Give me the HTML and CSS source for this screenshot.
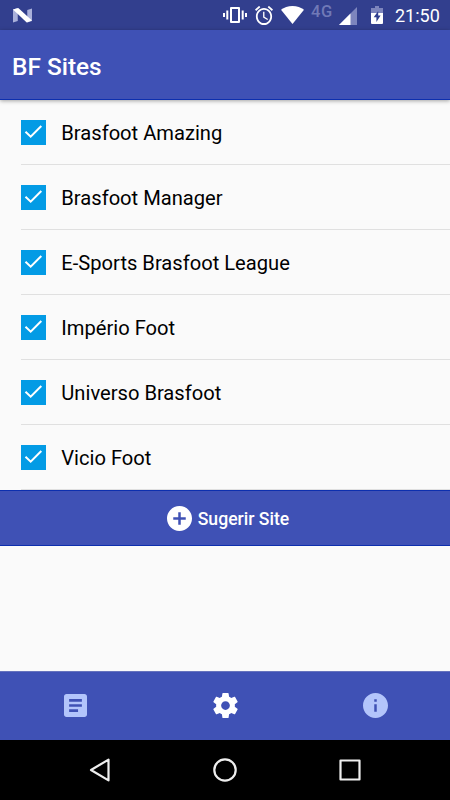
FILE: index.html
```html
<!DOCTYPE html>
<html lang="pt-br">
<head>
  <meta charset="UTF-8">
  <meta name="viewport" content="width=device-width, initial-scale=1.0">
  <title>BF Sites</title>
  <link rel="stylesheet" href="styles.css">
</head>
<body>
  <!-- Barra de status -->
  <div class="status-bar">
    <svg class="logo-n" viewBox="0 0 18 15" width="19" height="15" preserveAspectRatio="none">
      <path d="M0 1.500 4.500 0V13L0 14.500zM13.500 2 18 .5V13l-4.500 1.500z" fill="#a9b0da"/>
      <path d="M0 1.500 5 0 18 12.500l-5 2z" fill="#fff"/>
    </svg>
    <div class="status-icons">
      <svg class="vibrate" viewBox="0 0 24 18" width="24" height="18">
        <path d="M8 2h8v14H8z" fill="none" stroke="#fff" stroke-width="2" stroke-linejoin="round"/>
        <path d="M1 7v4M4.300 4.500v9M19.700 4.500v9M23 7v4" stroke="#fff" stroke-width="2"/>
      </svg>
      <svg class="alarm" viewBox="2 2 20 20" width="18" height="19" preserveAspectRatio="none">
        <path fill="#fff" d="M22 5.720l-4.600-3.860-1.290 1.530 4.600 3.860L22 5.720zM7.880 3.390L6.600 1.860 2 5.710l1.290 1.530 4.590-3.850zM12.500 8H11v6l4.750 2.850.75-1.230-4-2.370V8zM12 4c-4.970 0-9 4.030-9 9s4.020 9 9 9c4.970 0 9-4.030 9-9s-4.030-9-9-9zm0 16c-3.870 0-7-3.130-7-7s3.130-7 7-7 7 3.130 7 7-3.130 7-7 7z"/>
      </svg>
      <svg class="wifi" viewBox="0 0 23 18" width="23" height="18">
        <path fill="#fff" d="M11.500 18 0 3.800C3 1.300 7 0 11.500 0S20 1.300 23 3.800z"/>
      </svg>
      <span class="network">4G</span>
      <svg class="signal" viewBox="0 0 18 18" width="18" height="18">
        <path fill="#7d85bd" d="M0 18 18 0v18z"/>
        <path fill="#fff" d="M0 18 11.500 6.500V18z"/>
      </svg>
      <svg class="battery" viewBox="0 0 12 18" width="12" height="18">
        <path fill="#7d85bd" d="M4 0h4v2h4v6H0V2h4z"/>
        <path fill="#fff" d="M0 7h12v10q0 1-1 1H1q-1 0-1-1z"/>
        <path fill="#303f8f" d="M7.200 5 2.700 11.300h2.700V16l4.200-6.500H7.200z"/>
      </svg>
      <span class="clock">21:50</span>
    </div>
  </div>

  <header class="toolbar">
    <h1>BF Sites</h1>
  </header>

  <!-- Lista de sites -->
  <main class="content">
    <ul class="site-list">
      <li class="site">
        <span class="check"><svg viewBox="0 0 25 25" width="25" height="25"><path d="M4.500 11.700 9.700 16.700 20.300 6"/></svg></span>
        <span class="site-name">Brasfoot Amazing</span>
      </li>
      <li class="site">
        <span class="check"><svg viewBox="0 0 25 25" width="25" height="25"><path d="M4.500 11.700 9.700 16.700 20.300 6"/></svg></span>
        <span class="site-name">Brasfoot Manager</span>
      </li>
      <li class="site">
        <span class="check"><svg viewBox="0 0 25 25" width="25" height="25"><path d="M4.500 11.700 9.700 16.700 20.300 6"/></svg></span>
        <span class="site-name">E-Sports Brasfoot League</span>
      </li>
      <li class="site">
        <span class="check"><svg viewBox="0 0 25 25" width="25" height="25"><path d="M4.500 11.700 9.700 16.700 20.300 6"/></svg></span>
        <span class="site-name">Império Foot</span>
      </li>
      <li class="site">
        <span class="check"><svg viewBox="0 0 25 25" width="25" height="25"><path d="M4.500 11.700 9.700 16.700 20.300 6"/></svg></span>
        <span class="site-name">Universo Brasfoot</span>
      </li>
      <li class="site">
        <span class="check"><svg viewBox="0 0 25 25" width="25" height="25"><path d="M4.500 11.700 9.700 16.700 20.300 6"/></svg></span>
        <span class="site-name">Vicio Foot</span>
      </li>
    </ul>
    <button class="suggest">
      <svg viewBox="2 2 20 20" width="25" height="25">
        <path fill="#fff" d="M12 2C6.480 2 2 6.480 2 12s4.480 10 10 10 10-4.480 10-10S17.520 2 12 2zm5 11h-4v4h-2v-4H7v-2h4V7h2v4h4v2z"/>
      </svg>
      <span class="suggest-label">Sugerir Site</span>
    </button>
  </main>

  <!-- Abas -->
  <nav class="tabs">
    <a class="tab">
      <svg viewBox="3 3 18 18" width="23" height="23">
        <path d="M19 3H5c-1.100 0-2 .9-2 2v14c0 1.100.9 2 2 2h14c1.100 0 2-.9 2-2V5c0-1.100-.9-2-2-2zm-5 14H7v-2h7v2zm3-4H7v-2h10v2zm0-4H7V7h10v2z"/>
      </svg>
    </a>
    <a class="tab active">
      <svg viewBox="2 2 20 20" width="25" height="25">
        <path d="M19.430 12.980c.04-.32.07-.64.07-.98s-.03-.66-.07-.98l2.110-1.650c.19-.15.24-.42.12-.64l-2-3.460c-.12-.22-.39-.3-.61-.22l-2.490 1c-.52-.4-1.080-.73-1.690-.98l-.38-2.650C14.460 2.180 14.250 2 14 2h-4c-.25 0-.46.18-.49.42l-.38 2.650c-.61.25-1.170.59-1.690.98l-2.490-1c-.23-.09-.49 0-.61.22l-2 3.460c-.13.22-.07.49.12.64l2.110 1.650c-.04.32-.07.65-.07.98s.03.66.07.98l-2.110 1.650c-.19.15-.24.42-.12.64l2 3.460c.12.22.39.3.61.22l2.490-1c.52.4 1.080.73 1.690.98l.38 2.650c.03.24.24.42.49.42h4c.25 0 .46-.18.49-.42l.38-2.650c.61-.25 1.170-.59 1.690-.98l2.490 1c.23.09.49 0 .61-.22l2-3.460c.12-.22.07-.49-.12-.64l-2.110-1.650zM12 15.500c-1.930 0-3.500-1.570-3.500-3.500s1.570-3.500 3.500-3.500 3.500 1.570 3.500 3.500-1.570 3.500-3.500 3.500z"/>
      </svg>
    </a>
    <a class="tab">
      <svg viewBox="2 2 20 20" width="25" height="25">
        <path d="M12 2C6.480 2 2 6.480 2 12s4.480 10 10 10 10-4.480 10-10S17.520 2 12 2zm1 15h-2v-6h2v6zm0-8h-2V7h2v2z"/>
      </svg>
    </a>
  </nav>

  <!-- Botões do sistema -->
  <div class="system-nav">
    <svg viewBox="0 0 24 24" width="24" height="24"><path d="M20.500 1.600v20.800L3 12z"/></svg>
    <svg viewBox="0 0 24 24" width="24" height="24"><circle cx="12" cy="12" r="10.700"/></svg>
    <svg viewBox="0 0 24 24" width="24" height="24"><rect x="2.500" y="2.500" width="19" height="19"/></svg>
  </div>
</body>
</html>
```
FILE: styles.css
```css
* {
  box-sizing: border-box;
}

body {
  margin: 0;
  height: 100vh;
  display: flex;
  flex-direction: column;
  overflow: hidden;
  font-family: Roboto, sans-serif;
  background: #fafafa;
  color: #000;
}

svg {
  display: block;
  flex: none;
}

/* Barra de status */
.status-bar {
  height: 30px;
  display: flex;
  align-items: center;
  justify-content: space-between;
  padding: 0 10px 0 13px;
  background: #323f8e;
  color: #fff;
}

.status-icons {
  display: flex;
  align-items: center;
}

.alarm {
  margin-left: 8px;
}

.wifi {
  margin-left: 8px;
}

.network {
  width: 22px;
  margin-left: 7px;
  padding-bottom: 7px;
  color: #7079b7;
  font-size: 16.5px;
  font-weight: 500;
  line-height: 16px;
  letter-spacing: 0.5px;
}

.signal {
  margin: 2px 0 0 6px;
}

.battery {
  margin-left: 14px;
}

.clock {
  width: 45px;
  margin-left: 12px;
  font-size: 18px;
  line-height: 30px;
  padding-top: 1px;
}

/* Título */
.toolbar {
  height: 70px;
  display: flex;
  align-items: center;
  padding: 4px 12px 0;
  background: #3f51b5;
  border-bottom: 1px solid #0d2fae;
  box-shadow: 0 1px 4px rgba(0, 0, 0, 0.35);
}

.toolbar h1 {
  margin: 0;
  color: #fff;
  font-size: 24.4px;
  font-weight: 500;
}

/* Lista */
.content {
  flex: 1;
}

.site-list {
  margin: 0;
  padding: 0 0 0 21px;
  list-style: none;
}

.site {
  height: 65px;
  display: flex;
  align-items: center;
  border-bottom: 1px solid #e0e0e0;
}

.check {
  margin-top: 1px;
  background: #039be5;
}

.check path {
  fill: none;
  stroke: #fff;
  stroke-width: 2;
}

.site-name {
  margin: 2px 0 0 15.3px;
  font-size: 20.15px;
}

.suggest {
  width: 100%;
  height: 56px;
  display: flex;
  align-items: center;
  justify-content: center;
  gap: 6px;
  padding: 0 0 0 6px;
  border: 0;
  border-top: 1px solid #0d2fae;
  border-bottom: 1px solid #0d2fae;
  background: #3f51b5;
  color: #fff;
  font: 500 17.6px Roboto, sans-serif;
}

.suggest-label {
  padding-top: 2px;
}

/* Abas */
.tabs {
  height: 69px;
  display: flex;
  padding-bottom: 2px;
  background: #3f51b5;
  border-top: 1px solid #6673bd;
}

.tab {
  flex: 1;
  display: flex;
  align-items: center;
  justify-content: center;
  fill: #b3c5fb;
}

.tab.active {
  fill: #fff;
}

/* Botões do sistema */
.system-nav {
  height: 60px;
  display: flex;
  align-items: center;
  justify-content: space-between;
  padding: 0 88px;
  background: #000;
}

.system-nav svg {
  fill: none;
  stroke: #eee;
  stroke-width: 2.2;
  stroke-linejoin: round;
}
```
